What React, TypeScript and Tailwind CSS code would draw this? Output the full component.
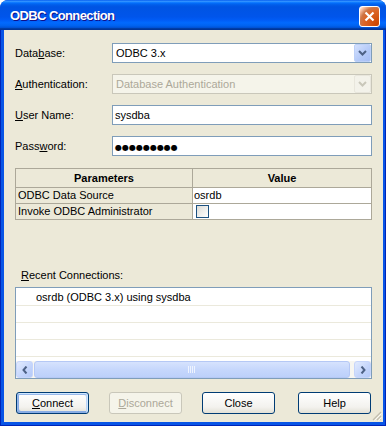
import React from 'react';

function Chevron({ color }: { color: string }) {
  return (
    <svg width="9" height="6" viewBox="0 0 9 6">
      <polyline points="1,1 4.5,4.5 8,1" fill="none" stroke={color} strokeWidth="2" />
    </svg>
  );
}

function ComboBox({ text, disabled }: { text: string; disabled?: boolean }) {
  return (
    <div
      className={
        disabled
          ? 'flex h-[20px] border border-[#c9c7ba] bg-[#f5f4ea]'
          : 'flex h-[20px] border border-[#7f9db9] bg-white'
      }
    >
      <div
        className={
          disabled
            ? 'flex-1 pl-[3px] leading-[18px] text-[#aca899]'
            : 'flex-1 pl-[3px] leading-[18px] text-black'
        }
      >
        {text}
      </div>
      {disabled ? (
        <div className="flex h-[18px] w-[17px] items-center justify-center rounded-[2px] border border-[#e8e6dc] bg-[#f3f2ea]">
          <Chevron color="#c9c7ba" />
        </div>
      ) : (
        <div className="flex h-[18px] w-[17px] items-center justify-center rounded-[2px] border border-[#bcd0f8] bg-[linear-gradient(135deg,#d4e1fe,#b3c9f8_60%,#a6bef5)]">
          <Chevron color="#4d6185" />
        </div>
      )}
    </div>
  );
}

function TextBox({ children }: { children: React.ReactNode }) {
  return (
    <div className="h-[20px] border border-[#7f9db9] bg-white pl-[2px] leading-[18px]">{children}</div>
  );
}

function Field({ label, children }: { label: React.ReactNode; children: React.ReactNode }) {
  return (
    <div className="flex h-[20px] items-center">
      <div className="w-[97px]">{label}</div>
      <div className="flex-1">{children}</div>
    </div>
  );
}

function ScrollButton({ dir }: { dir: 'left' | 'right' }) {
  return (
    <div className="flex h-[17px] w-[17px] items-center justify-center rounded-[3px] border border-[#c6d5fb] bg-[linear-gradient(135deg,#e2ebfe,#c3d4fb_60%,#b4c9f8)]">
      <svg width="6" height="8" viewBox="0 0 6 8">
        <polyline
          points={dir === 'left' ? '4.5,0.5 1.5,4 4.5,7.5' : '1.5,0.5 4.5,4 1.5,7.5'}
          fill="none"
          stroke="#4d6185"
          strokeWidth="2"
        />
      </svg>
    </div>
  );
}

function XPButton({
  children,
  primary,
  disabled,
  className,
}: {
  children: React.ReactNode;
  primary?: boolean;
  disabled?: boolean;
  className?: string;
}) {
  let cls =
    'flex h-[22px] w-[73px] items-center justify-center rounded-[3px] border border-[#003c74] bg-[linear-gradient(180deg,#ffffff,#f3f2ee_70%,#e3e1d6)] text-black';
  if (primary)
    cls +=
      ' shadow-[inset_-1px_1px_#cee7ff,inset_1px_2px_#98b8ea,inset_-2px_2px_#bcd4f6,inset_1px_-1px_#89ade4,inset_2px_-2px_#89ade4]';
  if (disabled)
    cls =
      'flex h-[22px] w-[73px] items-center justify-center rounded-[3px] border border-[#c9c7ba] bg-[#f5f4ea] text-[#aca899]';
  return <div className={cls + ' ' + (className ?? '')}>{children}</div>;
}

export default function App() {
  return (
    <div className="h-[426px] w-[386px] bg-white font-['Liberation_Sans',Arial,sans-serif] text-[11px] text-black">
      <div className="flex h-full flex-col rounded-t-[8px] bg-[#0a4fd9]">
        {/* title bar */}
        <div className="flex h-[30px] items-start justify-between rounded-t-[8px] bg-[linear-gradient(180deg,#0058ee_0%,#3593ff_4%,#288eff_6%,#127dff_8%,#036ffc_10%,#0262ee_14%,#0057e5_20%,#0054e3_24%,#0055eb_56%,#005bf5_66%,#026afe_76%,#0062ef_86%,#0052d6_92%,#0040ab_94%,#003092_100%)] pl-[10px] pr-[6px]">
          <span className="mt-[8px] text-[13px] font-bold leading-[16px] tracking-[-0.6px] text-white [text-shadow:1px_1px_#0f1089]">
            ODBC Connection
          </span>
          <div className="mt-[6px] flex h-[21px] w-[21px] items-center justify-center rounded-[3px] border border-white bg-[radial-gradient(circle_at_90%_90%,#cc4600_0%,#dc6527_55%,#cd7546_70%,#ffccb2_90%,#ffffff_100%)]">
            <svg width="11" height="11" viewBox="0 0 11 11">
              <path d="M1.5 1.5 L9.5 9.5 M9.5 1.5 L1.5 9.5" stroke="white" strokeWidth="2.2" />
            </svg>
          </div>
        </div>

        {/* frame + body */}
        <div className="flex flex-1 border-x border-b border-[#0025b8] bg-[#0855e6] pb-[3px] pl-[3px] pr-[2px]">
          <div className="relative flex flex-1 flex-col bg-[#ece9d8] px-[11px] pt-[13px]">
            <div className="flex flex-col gap-[11px]">
              <Field
                label={
                  <span>
                    Data<u>b</u>ase:
                  </span>
                }
              >
                <ComboBox text="ODBC 3.x" />
              </Field>
              <Field
                label={
                  <span>
                    <u>A</u>uthentication:
                  </span>
                }
              >
                <ComboBox text="Database Authentication" disabled />
              </Field>
              <Field
                label={
                  <span>
                    <u>U</u>ser Name:
                  </span>
                }
              >
                <TextBox>sysdba</TextBox>
              </Field>
              <Field
                label={
                  <span>
                    Pass<u>w</u>ord:
                  </span>
                }
              >
                <TextBox>
                  <span className="font-['DejaVu_Sans',sans-serif] text-[8px] tracking-[0px]">●●●●●●●●●</span>
                </TextBox>
              </Field>
            </div>

            {/* parameters table */}
            <div className="mt-[12px] border-l border-t border-[#aca899]">
              <div className="flex h-[19px] font-bold">
                <div className="flex w-[177px] items-center justify-center border-b border-r border-[#aca899]">
                  Parameters
                </div>
                <div className="flex flex-1 items-center justify-center border-b border-r border-[#aca899]">
                  Value
                </div>
              </div>
              <div className="flex h-[16px]">
                <div className="w-[177px] border-b border-r border-[#aca899] pl-[2px] leading-[15px]">
                  ODBC Data Source
                </div>
                <div className="flex-1 border-b border-r border-[#aca899] bg-white pl-[1px] leading-[15px]">
                  osrdb
                </div>
              </div>
              <div className="flex h-[16px]">
                <div className="w-[177px] border-b border-r border-[#aca899] pl-[2px] leading-[15px]">
                  Invoke ODBC Administrator
                </div>
                <div className="flex-1 border-b border-r border-[#aca899] bg-white pl-[3px] pt-[1px]">
                  <div className="h-[13px] w-[13px] border border-[#1c5180] bg-[linear-gradient(135deg,#dcdcd7,#ffffff)]" />
                </div>
              </div>
            </div>

            {/* recent connections */}
            <div className="ml-[6px] mt-[48px] h-[14px] leading-[14px]">
              <u>R</u>ecent Connections:
            </div>
            <div className="mt-[5px] flex h-[92px] flex-col border border-[#7f9db9] bg-white">
              <div className="flex-1 pt-[1px]">
                <div className="h-[17px] border-b border-[#ebe9dc] pl-[20px] leading-[16px]">
                  osrdb (ODBC 3.x) using sysdba
                </div>
                <div className="h-[17px] border-b border-[#ebe9dc]" />
                <div className="h-[17px] border-b border-[#ebe9dc]" />
                <div className="h-[17px] border-b border-[#ebe9dc]" />
              </div>
              <div className="flex h-[17px] bg-[#f7f6f1]">
                <ScrollButton dir="left" />
                <div className="ml-[1px] mr-[4px] flex flex-1 items-center justify-center rounded-[3px] border border-[#b5c8f5] bg-[linear-gradient(180deg,#d6e2fd,#c6d7fc_50%,#bcd0fa)]">
                  <svg width="8" height="7" viewBox="0 0 8 7">
                    <path d="M0.5 0 V7 M2.5 0 V7 M4.5 0 V7 M6.5 0 V7" stroke="#eef3fe" strokeWidth="1" />
                  </svg>
                </div>
                <ScrollButton dir="right" />
              </div>
            </div>

            {/* buttons */}
            <div className="ml-[1px] mt-[13px] flex">
              <XPButton primary>
                <span>
                  <u>C</u>onnect
                </span>
              </XPButton>
              <XPButton disabled className="ml-[20px]">
                <span>
                  <u>D</u>isconnect
                </span>
              </XPButton>
              <XPButton className="ml-[20px]">Close</XPButton>
              <XPButton className="ml-[23px]">Help</XPButton>
            </div>

            {/* resize grip */}
            <svg className="absolute bottom-[1px] right-[1px]" width="12" height="12" viewBox="0 0 12 12">
              <path d="M11 3 L3 11 M11 7 L7 11 M11 10.5 L10.5 11" stroke="#c2beae" strokeWidth="1.2" />
              <path d="M11.5 4.5 L4.5 11.5 M11.5 8.5 L8.5 11.5" stroke="#ffffff" strokeWidth="0.8" />
            </svg>
          </div>
        </div>
      </div>
    </div>
  );
}
